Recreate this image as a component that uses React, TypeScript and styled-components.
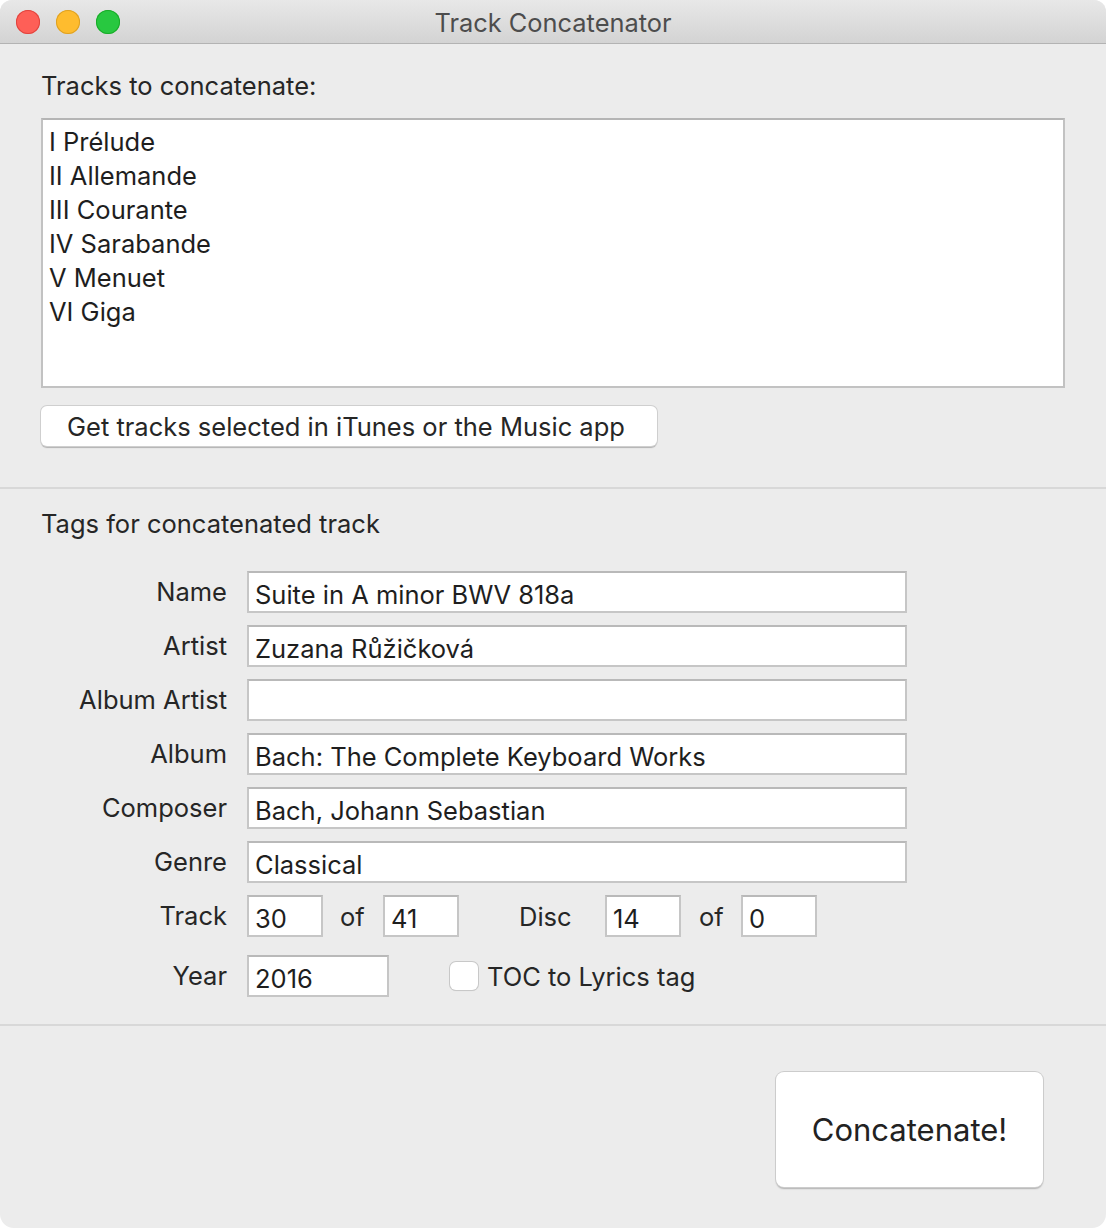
import React from "react";
import styled, { createGlobalStyle } from "styled-components";

const Global = createGlobalStyle`
  html, body { margin: 0; padding: 0; background: #ffffff; }
  * { box-sizing: border-box; }
  body { font-family: Inter, "Noto Sans", "Liberation Sans", sans-serif; color: #262626; }
`;

const Window = styled.div`
  width: 1106px;
  height: 1228px;
  background: #ececec;
  border-radius: 12px 12px 14px 14px;
  overflow: hidden;
  display: flex;
  flex-direction: column;
`;

const TitleBar = styled.div`
  height: 44px;
  flex: none;
  position: relative;
  display: flex;
  align-items: center;
  justify-content: center;
  background: linear-gradient(#e8e8e8, #d3d3d3);
  border-bottom: 1px solid #b3b3b3;
`;

const Lights = styled.div`
  position: absolute;
  left: 16px;
  top: 10px;
  display: flex;
  gap: 16px;
`;

const Light = styled.span<{ $c: string; $b: string }>`
  width: 24px;
  height: 24px;
  border-radius: 50%;
  background: ${(p) => p.$c};
  box-shadow: inset 0 0 0 1px ${(p) => p.$b};
`;

const Title = styled.div`
  font-size: 25.4px;
  color: #4d4d4d;
  padding-top: 2px;
`;

const Section = styled.div`
  padding: 0 41px;
  display: flex;
  flex-direction: column;
`;

const TopSection = styled(Section)`
  padding-top: 27px;
  padding-bottom: 41px;
  border-bottom: 2px solid #d8d8d8;
`;

const Heading = styled.div`
  font-size: 25.5px;
  line-height: 30px;
`;

const TrackList = styled.div`
  margin-top: 17px;
  height: 270px;
  background: #ffffff;
  border: 2px solid #c2c2c2;
  border-top-color: #b5b5b5;
  padding: 5px 0 0 6px;
  display: flex;
  flex-direction: column;
`;

const TrackItem = styled.div`
  font-size: 25.5px;
  line-height: 34px;
  color: #1e1e1e;
`;

const PushButton = styled.button`
  font-family: inherit;
  align-self: flex-start;
  margin-top: 18px;
  height: 40px;
  width: 616px;
  padding: 0 0 0 26px;
  text-align: left;
  font-size: 25.5px;
  color: #262626;
  background: #ffffff;
  border: none;
  border-radius: 6px;
  box-shadow: 0 0 0 1px #cfcfcf, 0 1.5px 1px rgba(0, 0, 0, 0.25);
`;

const TagSection = styled(Section)`
  padding-top: 20px;
  padding-bottom: 27px;
  border-bottom: 2px solid #d8d8d8;
`;

const Form = styled.div`
  margin-top: 32px;
  display: grid;
  grid-template-columns: 186px 660px;
  column-gap: 20px;
  row-gap: 12px;
  align-items: center;
`;

const Label = styled.div<{ $top?: number }>`
  font-size: 25.5px;
  text-align: right;
  color: #262626;
  padding-bottom: 2px;
  margin-top: ${(p) => p.$top ?? 0}px;
`;

const Field = styled.div<{ $w?: number }>`
  height: 42px;
  width: ${(p) => (p.$w ? `${p.$w}px` : "100%")};
  flex: none;
  background: #ffffff;
  border: 2px solid #c6c6c6;
  border-top-color: #b9b9b9;
  font-size: 25.5px;
  line-height: 38px;
  padding: 3px 0 0 6px;
  color: #1e1e1e;
  white-space: nowrap;
  overflow: hidden;
`;

const InlineRow = styled.div<{ $top?: number }>`
  display: flex;
  align-items: center;
  margin-top: ${(p) => p.$top ?? 0}px;
`;

const Word = styled.div<{ $w: number; $pl: number }>`
  font-size: 25.5px;
  width: ${(p) => p.$w}px;
  padding-left: ${(p) => p.$pl}px;
  flex: none;
  color: #262626;
  white-space: nowrap;
`;

const CheckLabel = styled.label`
  display: flex;
  align-items: center;
  margin-left: 61px;
  font-size: 25.5px;
  gap: 9px;
  color: #262626;
`;

const Box = styled.span`
  width: 28px;
  height: 28px;
  border-radius: 6px;
  background: #ffffff;
  box-shadow: 0 0 0 1px #c8c8c8, 0 1px 1px rgba(0, 0, 0, 0.12);
`;

const Footer = styled.div`
  flex: 1;
  display: flex;
  justify-content: flex-end;
  align-items: flex-start;
  padding: 46px 63px 0 0;
`;

const BigButton = styled.button`
  font-family: inherit;
  width: 267px;
  height: 115px;
  font-size: 31px;
  color: #222222;
  background: #ffffff;
  border: none;
  border-radius: 8px;
  box-shadow: 0 0 0 1px #cccccc, 0 1.5px 1.5px rgba(0, 0, 0, 0.25);
`;

const tracks = [
  "I Prélude",
  "II Allemande",
  "III Courante",
  "IV Sarabande",
  "V Menuet",
  "VI Giga",
];

const tags: [string, string][] = [
  ["Name", "Suite in A minor BWV 818a"],
  ["Artist", "Zuzana Růžičková"],
  ["Album Artist", ""],
  ["Album", "Bach: The Complete Keyboard Works"],
  ["Composer", "Bach, Johann Sebastian"],
  ["Genre", "Classical"],
];

export default function App() {
  return (
    <>
      <Global />
      <Window>
        <TitleBar>
          <Lights>
            <Light $c="#fe5f57" $b="#e0443e" />
            <Light $c="#febc2e" $b="#dea123" />
            <Light $c="#28c840" $b="#1aab29" />
          </Lights>
          <Title>Track Concatenator</Title>
        </TitleBar>
        <TopSection>
          <Heading>Tracks to concatenate:</Heading>
          <TrackList>
            {tracks.map((t) => (
              <TrackItem key={t}>{t}</TrackItem>
            ))}
          </TrackList>
          <PushButton>Get tracks selected in iTunes or the Music app</PushButton>
        </TopSection>
        <TagSection>
          <Heading>Tags for concatenated track</Heading>
          <Form>
            {tags.map(([l, v]) => (
              <React.Fragment key={l}>
                <Label>{l}</Label>
                <Field>{v}</Field>
              </React.Fragment>
            ))}
            <Label>Track</Label>
            <InlineRow>
              <Field $w={76}>30</Field>
              <Word $w={60} $pl={17}>of</Word>
              <Field $w={76}>41</Field>
              <Word $w={146} $pl={60}>Disc</Word>
              <Field $w={76}>14</Field>
              <Word $w={60} $pl={18}>of</Word>
              <Field $w={76}>0</Field>
            </InlineRow>
            <Label $top={6}>Year</Label>
            <InlineRow $top={6}>
              <Field $w={142}>2016</Field>
              <CheckLabel>
                <Box />
                TOC to Lyrics tag
              </CheckLabel>
            </InlineRow>
          </Form>
        </TagSection>
        <Footer>
          <BigButton>Concatenate!</BigButton>
        </Footer>
      </Window>
    </>
  );
}
